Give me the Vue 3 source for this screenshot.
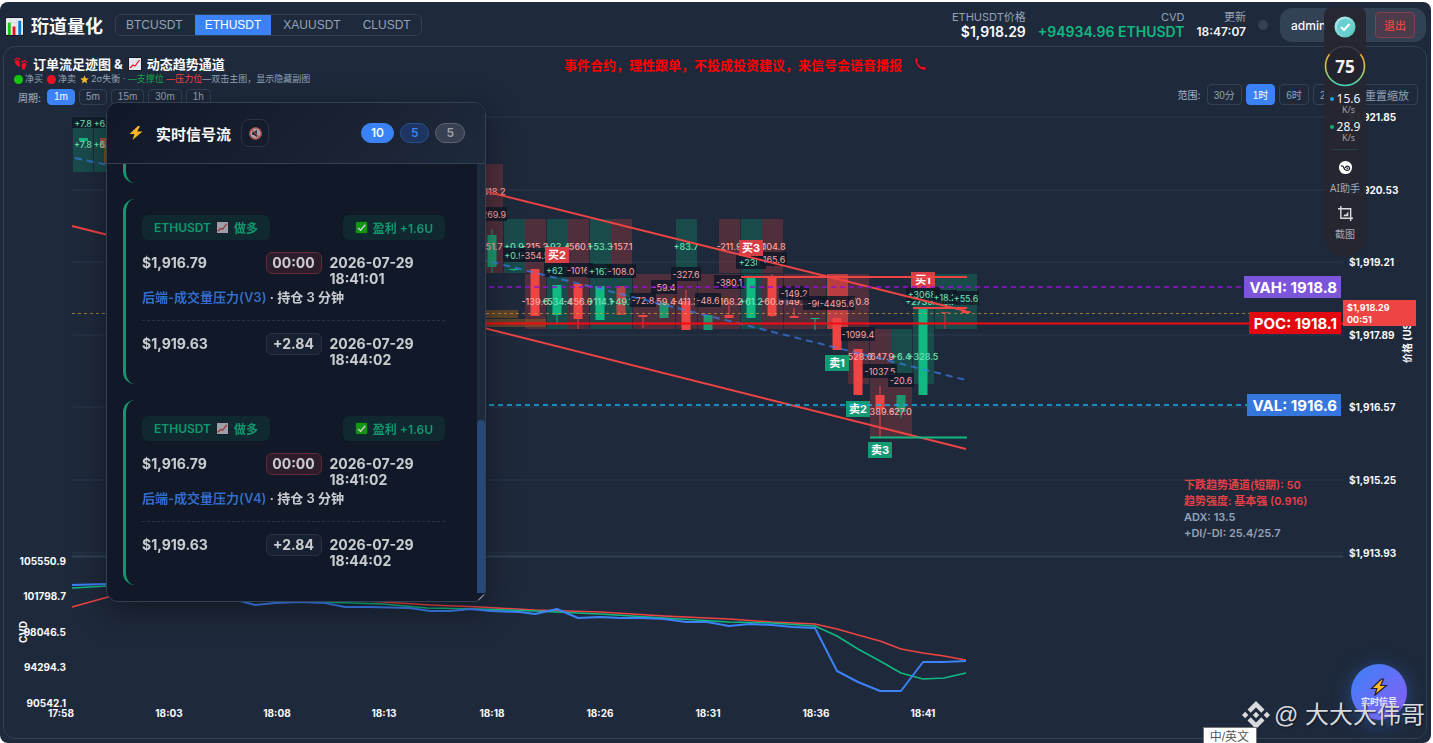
<template>
  <div class="dashboard">
    <!-- 顶部栏 -->
    <header class="header">
      <h1 class="brand">
        <svg class="brand-icon" viewBox="0 0 20 20">
          <rect x="0" y="0" width="20" height="20" rx="2" fill="#111827" />
          <rect x="1" y="1" width="18" height="18" rx="1" fill="#e8eaed" />
          <path d="M1 6h18M1 11h18M6 1v18M12 1v18" stroke="#cbd5e1" stroke-width="0.6" />
          <rect x="3" y="6" width="3" height="13" fill="#16c60c" />
          <rect x="8" y="10" width="3" height="9" fill="#e81224" />
          <rect x="14" y="4" width="3" height="15" fill="#0078d7" />
        </svg>
        <span>珩道量化</span>
      </h1>
      <nav class="symbols">
        <button
          v-for="s in symbols"
          :key="s"
          type="button"
          :class="['symbol', { active: s === symbol }]"
          @click="symbol = s"
        >{{ s }}</button>
      </nav>
      <div class="stats">
        <div class="stat">
          <span class="stat-label">{{ symbol }}价格</span>
          <span class="stat-value">$1,918.29</span>
        </div>
        <div class="stat">
          <span class="stat-label">CVD</span>
          <span class="stat-value up">+94934.96 ETHUSDT</span>
        </div>
        <div class="stat">
          <span class="stat-label">更新</span>
          <span class="stat-value time">18:47:07</span>
        </div>
        <i class="status-dot"></i>
        <div class="user">
          <span>admin</span>
          <button type="button" class="logout">退出</button>
        </div>
      </div>
    </header>

    <!-- 图表卡片 -->
    <main class="chart-card">
      <div class="chart-head">
        <div class="head-left">
          <h2 class="chart-title">
            <svg class="ico14" viewBox="0 0 14 14">
              <g fill="#e81224">
                <path d="M1 4.600C1.600 3 4.600 2.800 5.400 4.600c.5 1.300-.2 2 .4 3.200.8 1.700-1.300 2.700-2.200 1.300C2.900 7.900.6 6.800 1 4.600z" />
                <path d="M8 6.800c1.200-1.500 4.200-1.100 4.400 1 .1 1.500-1.400 2.200-1.500 3.600-.1 1.800-2.500 1.800-2.800.2-.2-1.400-1-3.500-.1-4.800z" />
                <circle cx="1.200" cy="2.500" r="0.900" /><circle cx="3" cy="1.500" r="1" /><circle cx="5.200" cy="2" r="1.100" />
                <circle cx="8.400" cy="4.700" r="1.100" /><circle cx="10.600" cy="4" r="1" /><circle cx="12.500" cy="5" r="0.900" />
              </g>
            </svg>
            <span>订单流足迹图 &amp;</span>
            <svg class="ico14" viewBox="0 0 14 14">
              <rect width="14" height="14" rx="1" fill="#111827" />
              <rect x="1" y="1" width="12" height="12" fill="#e8eaed" />
              <path d="M1 5h12M1 9h12M5 1v12M9 1v12" stroke="#cbd5e1" stroke-width="0.5" />
              <path d="M2 11l3-3 2 1 4.500-6" fill="none" stroke="#e81224" stroke-width="1.200" />
            </svg>
            <span>动态趋势通道</span>
          </h2>
          <div class="legend">
            <i class="dot green"></i><span>净买</span>
            <i class="dot red"></i><span>净卖</span>
            <svg class="star" viewBox="0 0 10 10">
              <path d="M5 .4l1.300 3.200 3.400.2-2.600 2.200.8 3.400L5 7.600 2.100 9.400l.8-3.400L.3 3.800l3.400-.2z" fill="#fcb827" />
            </svg>
            <span>2σ失衡 · <b class="support">—支撑位</b> <b class="resist">—压力位</b>—双击主图，显示隐藏副图</span>
          </div>
          <div class="periods">
            <span class="group-label">周期:</span>
            <button
              v-for="p in periods"
              :key="p"
              type="button"
              :class="['chip', { active: p === period }]"
              @click="period = p"
            >{{ p }}</button>
          </div>
        </div>
        <p class="notice">
          <span>事件合约，理性跟单，不投成投资建议，来信号会语音播报</span>
          <svg class="ico14" viewBox="0 0 14 14">
            <path d="M1.500 1.200C3 0 4 1.500 4.300 3c.2 1-.9 1.300-.6 2.200.7 1.900 2.300 3.600 4.200 4.500.9.4 1.300-.7 2.200-.5 1.500.4 3.300 1.400 2.100 3-1.500 1.800-5 .9-7.500-1.400C2 8.300-.4 3.500 1.500 1.200z" fill="#e81224" stroke="#111827" stroke-width="0.700" />
          </svg>
        </p>
        <div class="ranges">
          <span class="group-label">范围:</span>
          <button
            v-for="r in ranges"
            :key="r"
            type="button"
            :class="['range', { active: r === range }]"
            @click="range = r"
          >{{ r }}</button>
          <button type="button" class="range reset">重置缩放</button>
        </div>
      </div>

      <svg class="chart" viewBox="4 105 1422 633">
        <!-- 网格 -->
        <g stroke="#2b384c" stroke-width="1">
          <line v-for="t in priceTicks" :key="t.y" x1="72" x2="1343" :y1="t.y" :y2="t.y" />
          <line x1="72" x2="1343" y1="556.500" y2="556.500" stroke="#334155" stroke-width="2" />
        </g>

        <!-- 足迹单元格 -->
        <rect
          v-for="(c, i) in cells"
          :key="'c' + i"
          :x="cx(c[0]) - 10"
          :y="c[1]"
          width="21"
          :height="c[2] - c[1]"
          :fill="c[3] === 'g' ? '#10b981' : '#ef4444'"
          :fill-opacity="c[4] || 0.24"
        />
        <g>
          <rect x="73" y="118" width="20" height="54" fill="#10b981" fill-opacity="0.240" />
          <rect x="94" y="118" width="20" height="54" fill="#10b981" fill-opacity="0.240" />
          <rect x="79" y="138" width="9" height="3" fill="#10b981" />
          <rect x="100" y="138" width="9" height="10" fill="#ef4444" fill-opacity="0.700" />
          <rect x="104" y="148" width="3" height="16" fill="#b45309" fill-opacity="0.600" />
        </g>

        <!-- 成交量分布 -->
        <g fill="#a8651a" fill-opacity="0.450">
          <rect x="486" y="310" width="32" height="8" />
          <rect x="486" y="319" width="60" height="8" />
        </g>

        <!-- K线 -->
        <g v-for="k in candles" :key="'k' + k[0]" :fill="k[1] === 'g' ? '#10b981' : '#ef4444'" :opacity="k[6] || 1">
          <rect :x="cx(k[0]) - 0.5" :y="k[4]" width="1" :height="k[5] - k[4]" />
          <rect :x="cx(k[0]) - 4.5" :y="k[2]" width="9" :height="k[3] - k[2]" />
        </g>

        <!-- 单元格数值 -->
        <g class="cell-text">
          <text v-for="(t, i) in cellTexts" :key="'t' + i" :x="cx(t[0])" :y="t[1]" :fill="tone(t[2])">{{ t[2] }}</text>
          <text x="83" y="144" fill="#6ee7b7">+7.8</text>
          <text x="102" y="144" fill="#6ee7b7">+6.1</text>
        </g>

        <!-- 合计标签 -->
        <g v-for="(t, i) in totals" :key="'s' + i" class="total-text">
          <rect :x="cx(t[0]) - t[3]" :y="t[1] - 7" :width="t[3] * 2" height="14" fill="#111827" fill-opacity="0.850" />
          <text :x="cx(t[0])" :y="t[1]" :fill="tone(t[2])">{{ t[2] }}</text>
        </g>
        <g class="total-text">
          <rect x="72" y="117" width="36" height="11" fill="#111827" fill-opacity="0.850" />
          <text x="83" y="123" fill="#6ee7b7">+7.8</text>
          <text x="102" y="123" fill="#6ee7b7">+6.1</text>
        </g>

        <!-- 买卖标记 -->
        <g v-for="m in marks" :key="m.text" class="mark">
          <rect :x="m.x - 12" :y="m.y - 8" width="24" height="16" :fill="m.side === 'buy' ? '#d83f45' : '#129a72'" />
          <text :x="m.x" :y="m.y">{{ m.text }}</text>
        </g>

        <!-- 通道线 -->
        <g fill="none" stroke="#ef4444" stroke-width="2">
          <path d="M72 226L112 236" />
          <path d="M480 190L966 311" />
          <path d="M480 327L966 449" />
          <path d="M741 277H967M913 308H967" />
        </g>
        <g fill="none" stroke="#3b82f6" stroke-opacity="0.650" stroke-width="2" stroke-dasharray="7 5">
          <path d="M75 158L112 166" />
          <path d="M480 259L966 380" />
        </g>
        <path d="M870 437.500H967" stroke="#10b981" stroke-width="2" />

        <!-- 价值区 -->
        <path d="M72 313.500H1343" stroke="#d99a3a" stroke-opacity="0.700" stroke-dasharray="3 3" />
        <path d="M480 287H1343" stroke="#9810d8" stroke-width="1.500" stroke-dasharray="5 4" />
        <path d="M480 405H1343" stroke="#18aef0" stroke-width="1.500" stroke-dasharray="5 4" />
        <path d="M480 323.500H1343" stroke="#f30a12" stroke-width="2" />
        <g v-for="l in levels" :key="l.text" class="level">
          <rect :x="l.x" :y="l.y - 11" :width="1341 - l.x" height="22" :fill="l.color" />
          <text x="1337" :y="l.y">{{ l.text }}</text>
        </g>

        <!-- 趋势信息 -->
        <g class="trend">
          <text x="1184" y="485" fill="#e54046">下跌趋势通道(短期): 50</text>
          <text x="1184" y="501" fill="#e54046">趋势强度: 基本强 (0.916)</text>
          <text x="1184" y="517">ADX: 13.5</text>
          <text x="1184" y="533">+DI/-DI: 25.4/25.7</text>
        </g>

        <!-- 坐标轴 -->
        <g class="axis">
          <text v-for="t in priceTicks" :key="t.text" x="1349" :y="t.y">{{ t.text }}</text>
          <text x="0" y="0" transform="translate(1407 363) rotate(-90)">价格 (USDT)</text>
        </g>
        <rect x="1343" y="300" width="73" height="26" fill="#ef4444" />
        <g class="badge-text">
          <text x="1347" y="307">$1,918.29</text>
          <text x="1347" y="319">00:51</text>
        </g>
        <g class="axis end">
          <text v-for="t in cvdTicks" :key="t.text" x="66" :y="t.y">{{ t.text }}</text>
        </g>
        <g class="axis mid">
          <text v-for="t in timeTicks" :key="t.text" :x="t.x" y="713">{{ t.text }}</text>
          <text x="0" y="0" transform="translate(23 632) rotate(-90)">CVD</text>
        </g>

        <!-- CVD 曲线 -->
        <g fill="none" stroke-linejoin="round">
          <path d="M72 607L108 597L200 592L383 602L430 605L480 607L535 610L600 612L664 616L729 619L772 622L815 624L837 629L858 635L880 641L901 649L923 653L944 656L966 660" stroke="#ef4444" stroke-width="1.500" />
          <path d="M72 588L108 586L200 592L323 602L383 604L427 608L480 609L535 611L600 614L664 618L729 622L772 623L815 626L837 636L858 649L880 661L901 673L923 679L944 678L966 673" stroke="#10b981" stroke-width="1.500" />
          <path d="M72 585L106 584L200 590L255 605L275 603L300 602L325 603L345 607L370 607L410 608L430 611L450 611L470 609L492 611L520 612L535 614L557 609L578 618L600 617L621 618L643 618L664 619L686 622L707 622L729 626L750 624L772 625L793 627L815 628L837 671L858 682L880 691L901 691L923 662L944 662L966 661" stroke="#3b82f6" stroke-width="2" />
        </g>
      </svg>
    </main>

    <!-- 实时信号流 -->
    <section class="signals">
      <header class="signals-head">
        <svg class="bolt" viewBox="0 0 16 16">
          <path d="M10 1L1.500 9h5L4.500 15 14.500 6.500h-5.300L12 1z" fill="#fcb827" />
        </svg>
        <h3>实时信号流</h3>
        <button type="button" class="mute" aria-label="静音">
          <svg viewBox="0 0 16 16">
            <circle cx="8" cy="8" r="6.500" fill="#a7a3ac" />
            <path d="M4.500 6.500h2l3-2.500v8l-3-2.500h-2z" fill="#1f2937" />
            <circle cx="8" cy="8" r="6" fill="none" stroke="#b5443f" stroke-width="1.300" />
            <path d="M3.800 3.800l8.400 8.400" stroke="#b5443f" stroke-width="1.300" />
          </svg>
        </button>
        <div class="counts">
          <span class="count all">10</span>
          <span class="count blue">5</span>
          <span class="count gray">5</span>
        </div>
      </header>
      <div class="signals-wrap">
        <div class="signals-list">
          <article v-for="s in signals" :key="s.strategy" class="signal">
            <div class="signal-tags">
              <span class="tag">
                <span>ETHUSDT</span>
                <svg class="ico12" viewBox="0 0 14 14">
                  <rect width="14" height="14" rx="1" fill="#111827" />
                  <rect x="1" y="1" width="12" height="12" fill="#c0c3c8" />
                  <path d="M2 11l3-3 2 1 4.500-6" fill="none" stroke="#c23038" stroke-width="1.300" />
                </svg>
                <span>做多</span>
              </span>
              <span class="tag">
                <svg class="ico12" viewBox="0 0 14 14">
                  <rect width="14" height="14" rx="1" fill="#0b3d1c" />
                  <rect x="1" y="1" width="12" height="12" fill="#16b510" />
                  <path d="M3.500 7.500l2.500 2.500 5-6" fill="none" stroke="#ffffff" stroke-width="1.400" />
                </svg>
                <span>盈利 +1.6U</span>
              </span>
            </div>
            <div class="signal-row">
              <span class="cell">$1,916.79</span>
              <span class="pill danger">00:00</span>
              <span class="cell">2026-07-29 {{ s.open }}</span>
            </div>
            <p class="reason"><b>{{ s.strategy }}</b> · 持仓 3 分钟</p>
            <div class="signal-row closing">
              <span class="cell">$1,919.63</span>
              <span class="pill">+2.84</span>
              <span class="cell">2026-07-29 18:44:02</span>
            </div>
          </article>
        </div>
        <div class="track"><div class="thumb"></div></div>
      </div>
      <svg class="grip" viewBox="0 0 8 8">
        <rect width="8" height="8" fill="#111827" />
        <path d="M1 7.500L7.500 1M4.500 7.500L7.500 4.500" stroke="#e5e7eb" stroke-width="1" />
      </svg>
    </section>

    <!-- 悬浮工具条 -->
    <aside class="dock">
      <svg class="dock-logo" viewBox="0 0 22 22">
        <defs>
          <linearGradient id="orb" x1="0" y1="0" x2="1" y2="1">
            <stop offset="0" stop-color="#c3ecf8" />
            <stop offset="1" stop-color="#3fc4ad" />
          </linearGradient>
        </defs>
        <circle cx="11" cy="11" r="10.500" fill="url(#orb)" />
        <circle cx="11" cy="11" r="8" fill="#68cfd0" />
        <path d="M7 11l3 3 5.500-6" fill="none" stroke="#fff" stroke-width="2" />
      </svg>
      <div class="gauge">
        <svg viewBox="0 0 42 42">
          <defs>
            <linearGradient id="ring" x1="0" y1="0" x2="0" y2="1">
              <stop offset="0" stop-color="#f0a43a" />
              <stop offset="0.450" stop-color="#c5c850" />
              <stop offset="1" stop-color="#3fcfb4" />
            </linearGradient>
          </defs>
          <circle cx="21" cy="21" r="19.500" fill="#23232d" stroke="#3a3b46" stroke-width="1.500" />
          <path d="M5.500 9.200A19.500 19.500 0 1 0 36.500 9.200" fill="none" stroke="url(#ring)" stroke-width="1.600" />
        </svg>
        <b>75</b>
      </div>
      <div class="speed up-speed"><i></i><span>15.6</span><small>K/s</small></div>
      <div class="speed down-speed"><i></i><span>28.9</span><small>K/s</small></div>
      <hr />
      <button type="button" class="dock-btn">
        <svg viewBox="0 0 16 16">
          <circle cx="8" cy="8" r="7" fill="#fff" />
          <path d="M3 6.500c2.200-.6 3 .6 3.400 2S8.500 11.500 10.500 11 13 8.500 11.500 7.200 8 6.800 8 8.500" fill="none" stroke="#262631" stroke-width="1.400" />
          <circle cx="10" cy="8.800" r="0.900" fill="#262631" />
        </svg>
        <span>AI助手</span>
      </button>
      <button type="button" class="dock-btn">
        <svg viewBox="0 0 16 16">
          <path d="M3 0v13h13M0 3h13.500v13" fill="none" stroke="#dcdce0" stroke-width="1.500" />
          <path d="M11 5.500V11H5.500l2-2.500 1 .8z" fill="#dcdce0" />
        </svg>
        <span>截图</span>
      </button>
    </aside>

    <button type="button" class="fab">
      <svg viewBox="0 0 18 18">
        <path d="M11.500 1L1.500 10.500h5.300L5 17 16.500 7.500h-5.800L13.500 1z" fill="#fcb827" stroke="#1f1a2e" stroke-width="1.200" />
      </svg>
      <span>实时信号</span>
    </button>

    <div class="watermark">
      <svg viewBox="0 0 28 28" fill="#d8dadd">
        <path d="M14 0l8.500 8.500-3.200 3.200L14 6.400 8.700 11.700 5.500 8.500z" />
        <path d="M14 28l-8.500-8.500 3.200-3.200L14 21.600l5.300-5.300 3.200 3.200z" />
        <path d="M3.200 10.800L6.400 14l-3.200 3.200L0 14zM24.800 10.800L28 14l-3.200 3.200-3.200-3.200zM14 10.800l3.200 3.200-3.200 3.200-3.200-3.200z" />
      </svg>
      <span>@ 大大大伟哥</span>
    </div>
    <div class="ime">中/英文</div>
  </div>
</template>

<script setup>
import { ref } from 'vue'

const symbols = ['BTCUSDT', 'ETHUSDT', 'XAUUSDT', 'CLUSDT']
const periods = ['1m', '5m', '15m', '30m', '1h']
const ranges = ['30分', '1时', '6时', '24时']
const symbol = ref('ETHUSDT')
const period = ref('1m')
const range = ref('1时')

const signals = [
  { strategy: '后端-成交量压力(V2)', open: '18:41:00' },
  { strategy: '后端-成交量压力(V3)', open: '18:41:01' },
  { strategy: '后端-成交量压力(V4)', open: '18:41:02' }
]

// 第 k 根K线的中心横坐标
const cx = (k) => Math.round(492 + k * 21.55)
// 正值绿色，负值红色
const tone = (v) => (v.startsWith('+') ? '#6ee7b7' : '#fca5a5')

const priceTicks = [
  { y: 117, text: '$1,921.85' },
  { y: 190, text: '$1,920.53' },
  { y: 262, text: '$1,919.21' },
  { y: 335, text: '$1,917.89' },
  { y: 407, text: '$1,916.57' },
  { y: 480, text: '$1,915.25' },
  { y: 553, text: '$1,913.93' }
]
const cvdTicks = [
  { y: 561, text: '105550.9' },
  { y: 596, text: '101798.7' },
  { y: 632, text: '98046.5' },
  { y: 667, text: '94294.3' },
  { y: 703, text: '90542.1' }
]
const timeTicks = ['17:58', '18:03', '18:08', '18:13', '18:18', '18:26', '18:31', '18:36', '18:41'].map(
  (text, i) => ({ text, x: Math.round(61 + i * 107.8) })
)

// [序号, 上, 下, 方向, 透明度]
const cells = [
  [0, 164, 273, 'r'], [1, 219, 273, 'g'],
  [2, 219, 273, 'r'], [2, 274, 329, 'r'],
  [3, 219, 273, 'g'], [3, 274, 329, 'g'],
  [4, 219, 273, 'r'], [4, 274, 329, 'r'],
  [5, 219, 273, 'g'], [5, 274, 329, 'g'],
  [6, 219, 273, 'r'], [6, 274, 329, 'g'],
  [7, 274, 329, 'r'], [8, 274, 329, 'r'],
  [9, 219, 273, 'g'], [9, 274, 329, 'r'],
  [10, 274, 329, 'r'],
  [11, 219, 273, 'r'], [11, 274, 329, 'r'],
  [12, 219, 273, 'g'], [12, 274, 329, 'g'],
  [13, 219, 273, 'r'], [13, 274, 329, 'r'],
  [14, 274, 329, 'r'], [15, 274, 329, 'r'],
  [16, 274, 329, 'r', 0.75],
  [17, 274, 329, 'r'], [17, 329, 384, 'r'],
  [18, 329, 384, 'r'], [18, 384, 438, 'r'],
  [19, 329, 384, 'g'], [19, 384, 438, 'r'],
  [20, 274, 329, 'g'], [20, 329, 384, 'g'],
  [21, 274, 329, 'g'], [22, 274, 329, 'g']
]

// [序号, 方向, 实体上, 实体下, 影线上, 影线下, 透明度]
const candles = [
  [0, 'g', 235, 267, 229, 273, 0.75],
  [1, 'g', 269, 270, 269, 271],
  [2, 'r', 269, 316, 269, 316],
  [3, 'g', 285, 315, 285, 325],
  [4, 'r', 284, 319, 284, 329],
  [5, 'g', 286, 320, 286, 320],
  [6, 'r', 286, 315, 286, 315, 0.7],
  [7, 'r', 315, 317, 315, 328],
  [8, 'g', 303, 318, 303, 318, 0.75],
  [9, 'r', 301, 330, 290, 330],
  [10, 'g', 315, 330, 315, 330, 0.75],
  [11, 'r', 315, 318, 300, 318],
  [12, 'g', 278, 318, 278, 318],
  [13, 'r', 277, 316, 274, 317],
  [14, 'r', 316, 318, 308, 318],
  [15, 'g', 318, 319, 318, 330],
  [16, 'r', 318, 350, 318, 350],
  [17, 'r', 349, 395, 349, 395],
  [18, 'r', 395, 409, 386, 437],
  [19, 'g', 395, 412, 395, 418, 0.75],
  [20, 'g', 309, 395, 309, 395],
  [21, 'r', 312, 313, 312, 329, 0.75],
  [22, 'r', 311, 313, 311, 314]
]

// [序号, 纵坐标, 数值]
const cellTexts = [
  [0, 191, '-318.2'], [0, 246, '-51.7'], [1, 246, '+0.9'], [2, 246, '-215.2'], [3, 246, '+93.4'],
  [4, 246, '-560.1'], [5, 246, '+53.3'], [6, 246, '-157.1'], [9, 246, '+83.7'],
  [11, 246, '-211.9'], [12, 246, '+177.4'], [13, 246, '-104.8'],
  [2, 301, '-139.6'], [3, 301, '+534.4'], [4, 301, '-456.0'], [5, 301, '+114.1'],
  [6, 301, '+49.1'], [8, 301, '-59.4'], [9, 301, '-411.3'], [11, 301, '-168.2'],
  [12, 301, '+61.2'], [13, 301, '-60.8'], [14, 301, '-149.2'], [17, 301, '-70.8'],
  [20, 301, '+2739.5'], [21, 301, '+18.2'], [22, 301, '+55.6'],
  [17, 356, '-528.6'], [18, 356, '-647.9'], [19, 356, '+6.4'], [20, 356, '+328.5'],
  [18, 411, '-389.6'], [19, 411, '-27.0']
]

// [序号, 纵坐标, 数值, 半宽]
const totals = [
  [0, 214, '-269.9', 15], [1, 255, '+0.9', 11], [2, 255, '-354.5', 15],
  [3, 270, '+627', 13], [4, 270, '-1016', 15], [5, 271, '+167.', 13], [6, 271, '-108.0', 15],
  [7, 300, '-72.8', 13], [8, 287, '-59.4', 13], [9, 274, '-327.6', 15], [10, 300, '-48.6', 13],
  [11, 282, '-380.1', 15], [12, 262, '+238.', 15], [13, 259, '-165.6', 15],
  [14, 293, '-149.2', 15], [15, 303, '-96', 12], [16, 303, '-4495.6', 18],
  [17, 334, '-1099.4', 17], [18, 371, '-1037.5', 17], [19, 380, '-20.6', 13],
  [20, 294, '+3068.', 17], [21, 297, '+18.2', 12], [22, 298, '+55.6', 13]
]

const marks = [
  { text: '买2', x: 557, y: 255, side: 'buy' },
  { text: '买3', x: 751, y: 248, side: 'buy' },
  { text: '买1', x: 923, y: 280, side: 'buy' },
  { text: '卖1', x: 837, y: 363, side: 'sell' },
  { text: '卖2', x: 858, y: 409, side: 'sell' },
  { text: '卖3', x: 880, y: 450, side: 'sell' }
]

const levels = [
  { text: 'VAH: 1918.8', x: 1244, y: 287, color: '#7c55da' },
  { text: 'POC: 1918.1', x: 1249, y: 323, color: '#e3080e' },
  { text: 'VAL: 1916.6', x: 1247, y: 405, color: '#3677de' }
]
</script>

<style>
body {
  margin: 0;
  background: #ffffff;
}
</style>

<style scoped>
.dashboard {
  position: relative;
  margin: 2px 2px 0 0;
  padding-bottom: 4px;
  background: #1e293b;
  border-radius: 8px;
  overflow: hidden;
  color: #f8fafc;
  font-family: Inter, "Noto Sans CJK SC", sans-serif;
}

button {
  margin: 0;
  font-family: inherit;
  cursor: pointer;
}

/* 顶部栏 */
.header {
  display: flex;
  align-items: center;
  box-sizing: border-box;
  height: 44px;
  padding: 2px 5px 0;
}

.brand {
  display: flex;
  align-items: center;
  gap: 7px;
  margin: 3px 12px 0 0;
  font-size: 18px;
  line-height: 24px;
  font-weight: 700;
}

.brand-icon {
  width: 19px;
  height: 19px;
}

.symbols {
  display: flex;
  gap: 2px;
  border: 1px solid #334155;
  border-radius: 6px;
}

.symbol {
  height: 20px;
  padding: 0 10px;
  border: 0;
  background: transparent;
  color: #94a3b8;
  font-family: "Liberation Sans", Arial, sans-serif;
  font-size: 12px;
  line-height: 20px;
}

.symbol.active {
  background: #3b82f6;
  color: #ffffff;
}

.stats {
  display: flex;
  align-items: center;
  gap: 12px;
  margin-left: auto;
}

.stat {
  display: flex;
  flex-direction: column;
  align-items: flex-end;
}

.stat-label {
  color: #94a3b8;
  font-size: 11px;
  line-height: 14px;
}

.stat-value {
  font-size: 14px;
  line-height: 16px;
  font-weight: 600;
}

.stat-value.up {
  color: #10b981;
}

.stat-value.time {
  font-size: 12px;
}

.status-dot {
  width: 10px;
  height: 10px;
  border-radius: 50%;
  background: #374151;
}

.user {
  display: flex;
  align-items: center;
  justify-content: space-between;
  box-sizing: border-box;
  width: 146px;
  height: 34px;
  padding: 0 11px;
  border-radius: 12px;
  background: #334155;
  font-size: 12px;
  font-weight: 500;
}

.logout {
  height: 26px;
  padding: 0 8px;
  border: 1px solid #86404a;
  border-radius: 4px;
  background: #4d3a4b;
  color: #ef4444;
  font-size: 11px;
  font-weight: 500;
}

/* 图表卡片 */
.chart-card {
  margin: 0 4px 0 3px;
  border: 1px solid #334155;
  border-radius: 12px;
}

.chart-head {
  display: flex;
  justify-content: space-between;
  padding: 9px 8px 0 10px;
}

.chart-title {
  display: flex;
  align-items: center;
  gap: 5px;
  margin: 0;
  font-size: 13px;
  line-height: 16px;
  font-weight: 700;
}

.ico14 {
  width: 14px;
  height: 14px;
}

.ico12 {
  width: 13px;
  height: 13px;
}

.legend {
  display: flex;
  align-items: center;
  gap: 2px;
  color: #94a3b8;
  font-size: 9px;
  line-height: 14px;
}

.legend b {
  font-weight: 400;
}

.dot {
  width: 9px;
  height: 9px;
  border-radius: 50%;
}

.dot + span {
  margin-right: 2px;
}

.dot.green {
  background: #16c60c;
}

.dot.red {
  background: #e81224;
}

.star {
  width: 9px;
  height: 9px;
}

.support {
  color: #16a34a;
}

.resist {
  color: #ef4444;
}

.periods,
.ranges {
  display: flex;
  align-items: center;
  gap: 4px;
}

.periods {
  margin-top: 3px;
  padding-left: 4px;
}

.group-label {
  margin-right: 2px;
  color: #94a3b8;
  font-size: 10px;
  font-weight: 500;
}

.chip,
.range {
  padding: 0 6px;
  border: 1px solid #334155;
  border-radius: 4px;
  background: transparent;
  color: #94a3b8;
  font-family: "Liberation Sans", "Noto Sans CJK SC", sans-serif;
  font-size: 10px;
}

.chip {
  height: 16px;
  line-height: 14px;
}

.range {
  height: 21px;
}

.chip.active,
.range.active {
  border-color: #3b82f6;
  background: #3b82f6;
  color: #ffffff;
}

.range.reset {
  padding: 0 8px 0 12px;
  font-size: 11px;
}

.notice {
  display: flex;
  align-items: center;
  gap: 12px;
  height: 16px;
  margin: 0;
  padding-left: 4px;
  color: #ff0000;
  font-size: 13px;
  font-weight: 700;
}

.ranges {
  align-self: flex-end;
}

.chart {
  display: block;
  width: 100%;
}

.chart text {
  dominant-baseline: central;
}

.cell-text {
  font-size: 9px;
  font-weight: 500;
  text-anchor: middle;
}

.total-text {
  font-size: 9px;
  text-anchor: middle;
}

.mark {
  fill: #ffffff;
  font-size: 11px;
  font-weight: 700;
  text-anchor: middle;
}

.level {
  fill: #ffffff;
  font-size: 15px;
  font-weight: 700;
  text-anchor: end;
}

.trend {
  fill: #94a3b8;
  font-size: 11px;
  font-weight: 600;
}

.axis {
  fill: #f8fafc;
  font-size: 10px;
  font-weight: 700;
}

.axis.end {
  text-anchor: end;
}

.axis.mid {
  text-anchor: middle;
}

.badge-text {
  fill: #ffffff;
  font-size: 9px;
  font-weight: 700;
}

/* 信号面板 */
.signals {
  position: absolute;
  top: 100px;
  left: 106px;
  display: flex;
  flex-direction: column;
  box-sizing: border-box;
  width: 380px;
  height: 500px;
  border: 1px solid #334155;
  border-radius: 12px;
  background: #111827;
  box-shadow: 0 8px 32px rgba(0, 0, 0, 0.4);
  overflow: hidden;
}

.signals-head {
  display: flex;
  align-items: center;
  height: 60px;
  padding: 0 20px 0 21px;
  border-bottom: 1px solid #334155;
  background: linear-gradient(135deg, #111827, #1e293b);
}

.bolt {
  width: 16px;
  height: 16px;
}

.signals-head h3 {
  margin: 0 10px 0 12px;
  font-size: 15px;
  font-weight: 700;
}

.mute {
  display: flex;
  align-items: center;
  justify-content: center;
  width: 28px;
  height: 28px;
  padding: 0;
  border: 1px solid #2a3446;
  border-radius: 8px;
  background: #151d2c;
}

.mute svg {
  width: 15px;
  height: 15px;
}

.counts {
  display: flex;
  align-items: center;
  gap: 6px;
  margin-left: auto;
}

.count {
  padding: 0 10px;
  border: 1px solid #3b82f6;
  border-radius: 10px;
  font-size: 12px;
  line-height: 18px;
  font-weight: 600;
}

.count.all {
  background: #3b82f6;
  padding: 0 9px;
}

.count.blue {
  border-color: #28508f;
  background: #1d3560;
  color: #3b82f6;
}

.count.gray {
  border-color: #5b6472;
  background: #374151;
  color: #9ca3af;
}

.signals-wrap {
  flex: 1;
  display: flex;
  min-height: 0;
}

.signals-list {
  flex: 1;
  display: flex;
  flex-direction: column;
  justify-content: flex-end;
  gap: 16px;
  padding: 0 16px 16px;
  overflow: hidden;
}

.signal {
  flex-shrink: 0;
  padding: 16px;
  border-left: 3px solid #10b981;
  border-radius: 12px;
  opacity: 0.8;
}

.signal-tags {
  display: flex;
  justify-content: space-between;
  margin-bottom: 12px;
}

.tag {
  display: flex;
  align-items: center;
  gap: 5px;
  height: 25px;
  padding: 0 12px;
  border-radius: 6px;
  background: #112f35;
  color: #10b981;
  font-size: 12px;
  font-weight: 600;
}

.signal-row {
  display: grid;
  grid-template-columns: 1fr auto 1fr;
  align-items: start;
  gap: 8px;
  height: 35px;
  font-size: 14px;
  line-height: 16px;
  font-weight: 700;
}

.cell {
  padding-top: 3px;
}

.pill {
  box-sizing: border-box;
  width: 56px;
  height: 22px;
  border: 1px solid #2c394c;
  border-radius: 6px;
  background: #1a2536;
  line-height: 20px;
  text-align: center;
}

.pill.danger {
  border-color: #7b2f3c;
  background: #351f2d;
}

.reason {
  margin: 0;
  font-size: 13px;
  line-height: 20px;
  font-weight: 600;
}

.reason b {
  color: #3b82f6;
  font-weight: 600;
}

.signal-row.closing {
  margin-top: 13px;
  padding-top: 12px;
  border-top: 1px dashed #2c3a4f;
}

.track {
  display: flex;
  align-items: flex-end;
  width: 8px;
  background: #1e293b;
}

.thumb {
  width: 8px;
  height: 181px;
  border-radius: 4px 4px 0 0;
  background: #29487a;
}

.grip {
  position: absolute;
  right: 0;
  bottom: 0;
  width: 8px;
  height: 8px;
}

/* 悬浮工具条 */
.dock {
  position: absolute;
  top: 5px;
  right: 65px;
  display: flex;
  flex-direction: column;
  align-items: center;
  box-sizing: border-box;
  width: 42px;
  height: 250px;
  padding-top: 9px;
  border-radius: 8px 8px 21px 21px;
  background: rgba(38, 38, 49, 0.96);
  color: #f4f4f5;
  font-family: "Noto Sans", "Noto Sans CJK SC", sans-serif;
}

.dock-logo {
  width: 22px;
  height: 22px;
}

.gauge {
  display: flex;
  align-items: center;
  justify-content: center;
  width: 42px;
  height: 42px;
  margin: 7px 0 5px;
}

.gauge svg {
  width: 42px;
  height: 42px;
}

.gauge b {
  position: absolute;
  font-size: 17px;
}

.speed {
  display: grid;
  grid-template-columns: 5px auto;
  grid-template-rows: 14px 8px;
  align-content: start;
  align-items: center;
  column-gap: 2px;
  height: 28px;
  font-size: 12px;
  line-height: 14px;
}

.speed i {
  width: 4px;
  height: 4px;
  border-radius: 50%;
  background: #1aa3e8;
}

.down-speed i {
  background: #10b07a;
}

.speed small {
  grid-column: 2;
  color: #a1a1aa;
  font-size: 9px;
  line-height: 8px;
  text-align: center;
}

.dock hr {
  width: 26px;
  margin: 1px 0 10px;
  border: 0;
  border-top: 1px solid #274046;
}

.dock-btn {
  display: flex;
  flex-direction: column;
  align-items: center;
  gap: 6px;
  height: 46px;
  padding: 0;
  border: 0;
  background: transparent;
  color: #a9a9b2;
  font-size: 10px;
  line-height: 14px;
}

.dock-btn svg {
  width: 15px;
  height: 15px;
}

.fab {
  position: absolute;
  right: 24px;
  bottom: 23px;
  display: flex;
  flex-direction: column;
  align-items: center;
  justify-content: center;
  width: 56px;
  height: 56px;
  padding: 0;
  border: 0;
  border-radius: 50%;
  background: linear-gradient(135deg, #3b82f6, #8b5cf6);
  box-shadow: 0 4px 20px rgba(59, 130, 246, 0.4);
  color: #e8ecff;
  font-size: 9px;
  line-height: 11px;
  font-weight: 700;
}

.fab svg {
  width: 18px;
  height: 18px;
}

.watermark {
  position: absolute;
  right: 6px;
  bottom: 10px;
  display: flex;
  align-items: center;
  gap: 4px;
  color: #d8dadd;
  font-family: "Liberation Sans", "Noto Sans CJK SC", sans-serif;
  font-size: 24px;
  line-height: 36px;
  text-shadow: 1px 1px 2px #111827;
}

.watermark svg {
  width: 28px;
  height: 28px;
}

.ime {
  position: absolute;
  right: 174px;
  bottom: 0;
  height: 15px;
  padding: 0 7px 0 6px;
  border: 1px solid #767676;
  border-bottom: 0;
  background: #ffffff;
  color: #575757;
  font-family: "Liberation Sans", "Noto Sans CJK SC", sans-serif;
  font-size: 12px;
  line-height: 18px;
  overflow: hidden;
}
</style>
